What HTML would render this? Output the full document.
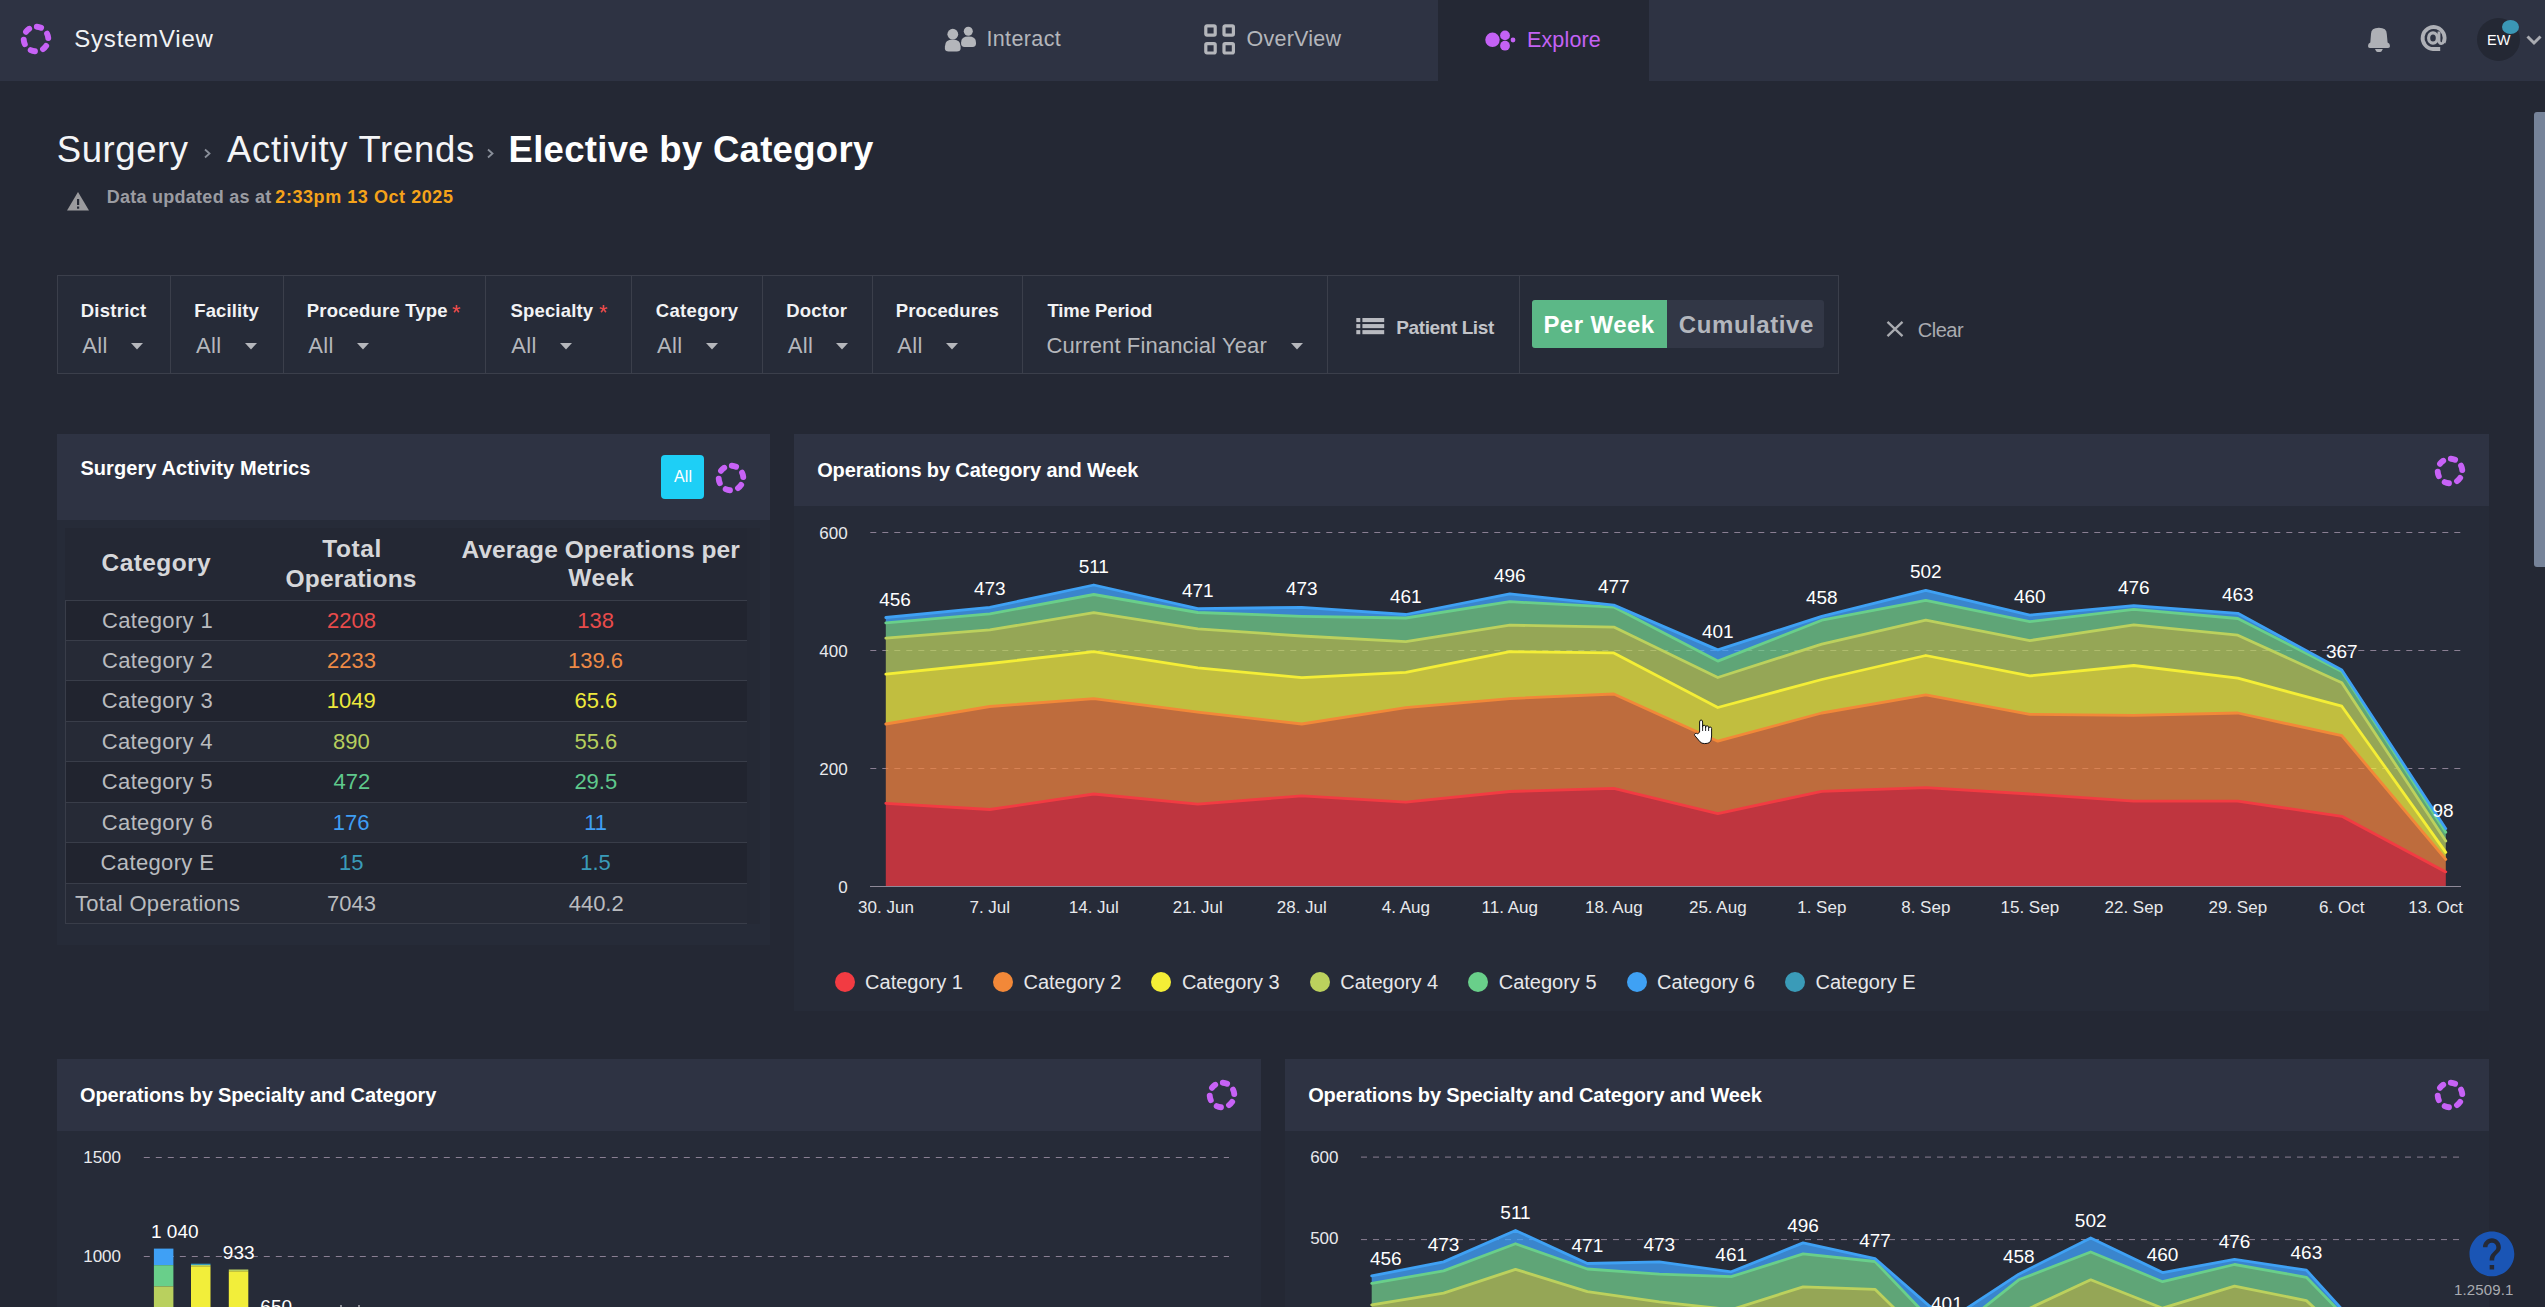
<!DOCTYPE html><html><head><meta charset="utf-8"><style>
html,body{margin:0;padding:0;}
body{width:2545px;height:1307px;overflow:hidden;background:#242834;font-family:"Liberation Sans", sans-serif;position:relative;}
.t{position:absolute;line-height:1;white-space:nowrap;}
.r{position:absolute;}
svg{position:absolute;overflow:visible;}
</style></head><body>
<div class="r" style="left:0px;top:0px;width:2545px;height:81px;background:#2e3343;"></div>
<div class="r" style="left:1438px;top:0px;width:211px;height:81px;background:#242834;"></div>
<svg style="left:16.200000000000003px;top:19.4px" width="40" height="40" viewBox="0 0 40 40"><circle cx="20.0" cy="20.0" r="12.3" fill="none" stroke="#c762f6" stroke-width="5.9" stroke-dasharray="4.40 8.48" stroke-linecap="round" transform="rotate(-86.2 20.0 20.0)"/></svg>
<div class="t" style="left:74.32px;top:26.98px;font-size:24px;color:#f2f3f5;font-weight:normal;letter-spacing:0.776px;">SystemView</div>
<svg style="left:944px;top:26px" width="34" height="28" viewBox="0 0 34 28" fill="#b4b6bb">
<circle cx="8.8" cy="8.2" r="5.4"/><path d="M0.9 20.5 Q0.9 13.6 8.75 13.6 Q16.6 13.6 16.6 20.5 L16.6 22.2 Q16.6 25.4 12.8 25.4 L4.7 25.4 Q0.9 25.4 0.9 22.2 Z"/>
<circle cx="24.3" cy="5.3" r="4.5"/><path d="M17.1 16.5 Q17.1 10.6 24.55 10.6 Q32 10.6 32 16.5 L32 17.8 Q32 20.9 28.6 20.9 L20.5 20.9 Q17.1 20.9 17.1 17.8 Z"/>
</svg>
<div class="t" style="left:986.41px;top:29.40px;font-size:21.5px;color:#b4b6bb;font-weight:normal;letter-spacing:0.378px;">Interact</div>
<svg style="left:1204px;top:24px" width="32" height="31" viewBox="0 0 32 31" fill="none" stroke="#b4b6bb" stroke-width="3.2">
<rect x="1.8" y="1.8" width="9.4" height="9.4" rx="1.2"/><rect x="20" y="1.8" width="9.4" height="9.4" rx="1.2"/>
<rect x="1.8" y="19.6" width="9.4" height="9.4" rx="1.2"/><rect x="20" y="19.6" width="9.4" height="9.4" rx="1.2"/>
</svg>
<div class="t" style="left:1246.58px;top:29.40px;font-size:21.5px;color:#b4b6bb;font-weight:normal;letter-spacing:0.220px;">OverView</div>
<svg style="left:1484px;top:28px" width="34" height="24" viewBox="0 0 34 24">
<circle cx="8.5" cy="11.8" r="7.2" fill="#c462f5"/><circle cx="21" cy="7.4" r="4.9" fill="#c462f5"/>
<circle cx="21" cy="17.7" r="4.9" fill="#c462f5"/><circle cx="29" cy="12" r="2.4" fill="#c462f5"/>
</svg>
<div class="t" style="left:1527.03px;top:29.60px;font-size:21.5px;color:#c462f5;font-weight:normal;letter-spacing:0.134px;">Explore</div>
<svg style="left:2360px;top:20px" width="40" height="38" viewBox="0 0 40 38" fill="#aeb0b6">
<path d="M11 14 Q11 7.8 18.9 7.8 Q26.8 7.8 26.8 14 L27.6 22.6 Q30 23.6 30 26 Q30 28 28 28 L9.8 28 Q8 28 8 26 Q8 23.6 10.3 22.6 Z"/>
<path d="M15 28.9 L22.8 28.9 L21.6 31.3 Q21.1 32.1 20.1 32.1 L17.7 32.1 Q16.7 32.1 16.2 31.3 Z"/>
</svg>
<svg style="left:2412px;top:18px" width="40" height="40" viewBox="0 0 40 40" fill="none" stroke="#aeb0b6">
<path d="M31.6 24.6 A11 11 0 1 0 21 31 L28.2 31" stroke-width="3.8"/>
<ellipse cx="21" cy="20" rx="4.4" ry="5.1" stroke-width="3.2"/>
<path d="M27 13.4 L27 22.6 Q27 25.6 29.3 25.6 Q31 25.6 31.8 23.8" stroke-width="2.8"/>
</svg>
<div class="r" style="left:2477px;top:18px;width:43px;height:43px;border-radius:50%;background:#242834"></div>
<div class="t" style="left:2487.00px;top:32.73px;font-size:14.5px;color:#ffffff;font-weight:normal;letter-spacing:-0.012px;">EW</div>
<div class="r" style="left:2502px;top:20px;width:17px;height:14px;border-radius:50%;background:#3b97b5"></div>
<svg style="left:2526px;top:35px" width="16" height="10" viewBox="0 0 16 10"><path d="M1.5 1.5 L8 8 L14.5 1.5" fill="none" stroke="#a9abb1" stroke-width="3"/></svg>
<div class="r" style="left:2534px;top:112.3px;width:11px;height:454.6px;border-radius:3px 0 0 3px;background:#768399"></div>
<div class="t" style="left:56.76px;top:132.10px;font-size:36.5px;color:#f4f5f7;font-weight:normal;letter-spacing:0.582px;">Surgery</div>
<svg style="left:203px;top:148px" width="9" height="11" viewBox="0 0 9 11"><path d="M2 1.5 L6.5 5.5 L2 9.5" fill="none" stroke="#8a8f9a" stroke-width="1.8"/></svg>
<div class="t" style="left:226.91px;top:132.10px;font-size:36.5px;color:#f4f5f7;font-weight:normal;letter-spacing:0.716px;">Activity Trends</div>
<svg style="left:486px;top:148px" width="9" height="11" viewBox="0 0 9 11"><path d="M2 1.5 L6.5 5.5 L2 9.5" fill="none" stroke="#8a8f9a" stroke-width="1.8"/></svg>
<div class="t" style="left:508.54px;top:132.10px;font-size:36.5px;color:#ffffff;font-weight:bold;letter-spacing:0.294px;">Elective by Category</div>
<svg style="left:66px;top:191px" width="24" height="20" viewBox="0 0 24 20"><path d="M12 1 L23 19.5 L1 19.5 Z" fill="#9b9b9e"/>
<rect x="11" y="8" width="2.2" height="6" fill="#242834"/><rect x="11" y="15.5" width="2.2" height="2.2" fill="#242834"/></svg>
<div class="t" style="left:106.78px;top:188.36px;font-size:18px;color:#9b9ca2;font-weight:bold;letter-spacing:0.260px;">Data updated as at</div>
<div class="t" style="left:275.37px;top:188.36px;font-size:18px;color:#f5a31a;font-weight:bold;letter-spacing:0.556px;">2:33pm 13 Oct 2025</div>
<div class="r" style="left:57px;top:275px;width:1780px;height:97px;border:1px solid #3b3f4b;background:#262b38"></div>
<div class="r" style="left:170px;top:276px;width:1px;height:97px;background:#3b3f4b;"></div>
<div class="r" style="left:283px;top:276px;width:1px;height:97px;background:#3b3f4b;"></div>
<div class="r" style="left:485px;top:276px;width:1px;height:97px;background:#3b3f4b;"></div>
<div class="r" style="left:631px;top:276px;width:1px;height:97px;background:#3b3f4b;"></div>
<div class="r" style="left:762px;top:276px;width:1px;height:97px;background:#3b3f4b;"></div>
<div class="r" style="left:872px;top:276px;width:1px;height:97px;background:#3b3f4b;"></div>
<div class="r" style="left:1022px;top:276px;width:1px;height:97px;background:#3b3f4b;"></div>
<div class="r" style="left:1327px;top:276px;width:1px;height:97px;background:#3b3f4b;"></div>
<div class="r" style="left:1519px;top:276px;width:1px;height:97px;background:#3b3f4b;"></div>
<div class="t" style="left:80.75px;top:301.54px;font-size:18.5px;color:#f2f3f5;font-weight:bold;letter-spacing:0.250px;">District</div>
<div class="t" style="left:82.34px;top:335.38px;font-size:22px;color:#b5b7bc;font-weight:normal;letter-spacing:0.332px;">All</div>
<svg style="left:131px;top:343px" width="12" height="7" viewBox="0 0 12 7"><path d="M0 0 L12 0 L6 6.5 Z" fill="#b5b7bc"/></svg>
<div class="t" style="left:194.35px;top:301.54px;font-size:18.5px;color:#f2f3f5;font-weight:bold;letter-spacing:0.087px;">Facility</div>
<div class="t" style="left:195.94px;top:335.38px;font-size:22px;color:#b5b7bc;font-weight:normal;letter-spacing:0.332px;">All</div>
<svg style="left:244.6px;top:343px" width="12" height="7" viewBox="0 0 12 7"><path d="M0 0 L12 0 L6 6.5 Z" fill="#b5b7bc"/></svg>
<div class="t" style="left:306.75px;top:301.54px;font-size:18.5px;color:#f2f3f5;font-weight:bold;letter-spacing:0.186px;">Procedure Type</div>
<div class="t" style="left:308.34px;top:335.38px;font-size:22px;color:#b5b7bc;font-weight:normal;letter-spacing:0.333px;">All</div>
<svg style="left:357px;top:343px" width="12" height="7" viewBox="0 0 12 7"><path d="M0 0 L12 0 L6 6.5 Z" fill="#b5b7bc"/></svg>
<div class="t" style="left:510.44px;top:301.54px;font-size:18.5px;color:#f2f3f5;font-weight:bold;letter-spacing:0.179px;">Specialty</div>
<div class="t" style="left:511.34px;top:335.38px;font-size:22px;color:#b5b7bc;font-weight:normal;letter-spacing:0.333px;">All</div>
<svg style="left:560px;top:343px" width="12" height="7" viewBox="0 0 12 7"><path d="M0 0 L12 0 L6 6.5 Z" fill="#b5b7bc"/></svg>
<div class="t" style="left:655.86px;top:301.54px;font-size:18.5px;color:#f2f3f5;font-weight:bold;letter-spacing:0.297px;">Category</div>
<div class="t" style="left:656.95px;top:335.38px;font-size:22px;color:#b5b7bc;font-weight:normal;letter-spacing:0.333px;">All</div>
<svg style="left:705.6px;top:343px" width="12" height="7" viewBox="0 0 12 7"><path d="M0 0 L12 0 L6 6.5 Z" fill="#b5b7bc"/></svg>
<div class="t" style="left:786.15px;top:301.54px;font-size:18.5px;color:#f2f3f5;font-weight:bold;letter-spacing:0.222px;">Doctor</div>
<div class="t" style="left:787.75px;top:335.38px;font-size:22px;color:#b5b7bc;font-weight:normal;letter-spacing:0.333px;">All</div>
<svg style="left:836.4px;top:343px" width="12" height="7" viewBox="0 0 12 7"><path d="M0 0 L12 0 L6 6.5 Z" fill="#b5b7bc"/></svg>
<div class="t" style="left:895.75px;top:301.54px;font-size:18.5px;color:#f2f3f5;font-weight:bold;letter-spacing:0.132px;">Procedures</div>
<div class="t" style="left:897.35px;top:335.38px;font-size:22px;color:#b5b7bc;font-weight:normal;letter-spacing:0.333px;">All</div>
<svg style="left:946px;top:343px" width="12" height="7" viewBox="0 0 12 7"><path d="M0 0 L12 0 L6 6.5 Z" fill="#b5b7bc"/></svg>
<svg style="left:452.4px;top:304.5px" width="9" height="8" viewBox="0 0 9 8" fill="#e84a4a"><path d="M3.7 0 H5.3 V2.9 L8 2 L8.5 3.5 L5.8 4.3 L7.5 6.8 L6.2 7.7 L4.5 5.3 L2.8 7.7 L1.5 6.8 L3.2 4.3 L0.5 3.5 L1 2 L3.7 2.9 Z"/></svg>
<svg style="left:598.6px;top:304.5px" width="9" height="8" viewBox="0 0 9 8" fill="#e84a4a"><path d="M3.7 0 H5.3 V2.9 L8 2 L8.5 3.5 L5.8 4.3 L7.5 6.8 L6.2 7.7 L4.5 5.3 L2.8 7.7 L1.5 6.8 L3.2 4.3 L0.5 3.5 L1 2 L3.7 2.9 Z"/></svg>
<div class="t" style="left:1047.41px;top:301.54px;font-size:18.5px;color:#f2f3f5;font-weight:bold;letter-spacing:-0.075px;">Time Period</div>
<div class="t" style="left:1046.40px;top:335.38px;font-size:22px;color:#b5b7bc;font-weight:normal;letter-spacing:0.126px;">Current Financial Year</div>
<svg style="left:1291px;top:343px" width="12" height="7" viewBox="0 0 12 7"><path d="M0 0 L12 0 L6 6.5 Z" fill="#b5b7bc"/></svg>
<svg style="left:1355.6px;top:317.9px" width="30" height="17" viewBox="0 0 30 17" fill="#b8bac0">
<rect x="0.3" y="0" width="4" height="4.1"/><rect x="6.4" y="0" width="21.8" height="4.1"/>
<rect x="0.3" y="6.05" width="4" height="4.1"/><rect x="6.4" y="6.05" width="21.8" height="4.1"/>
<rect x="0.3" y="12.1" width="4" height="4.1"/><rect x="6.4" y="12.1" width="21.8" height="4.1"/></svg>
<div class="t" style="left:1396.32px;top:317.82px;font-size:19px;color:#c2c4c9;font-weight:bold;letter-spacing:-0.408px;">Patient List</div>
<div class="r" style="left:1532px;top:300px;width:292px;height:48px;background:#323746;border-radius:3px"></div>
<div class="r" style="left:1532px;top:300px;width:135px;height:48px;background:#5cb887;border-radius:3px 0 0 3px"></div>
<div class="t" style="left:1543.38px;top:312.68px;font-size:24px;color:#ffffff;font-weight:bold;letter-spacing:0.454px;">Per Week</div>
<div class="t" style="left:1678.84px;top:312.68px;font-size:24px;color:#b3b6bd;font-weight:bold;letter-spacing:0.576px;">Cumulative</div>
<svg style="left:1886px;top:321px" width="18" height="16" viewBox="0 0 18 16"><path d="M1.5 0.8 L16.5 15.2 M16.5 0.8 L1.5 15.2" stroke="#a9abb0" stroke-width="2.3"/></svg>
<div class="t" style="left:1917.70px;top:319.67px;font-size:20px;color:#a9abb0;font-weight:normal;letter-spacing:-0.450px;">Clear</div>
<div class="r" style="left:57px;top:434px;width:713px;height:86px;background:#2e3343;"></div>
<div class="r" style="left:57px;top:520px;width:713px;height:425px;background:#262b38;"></div>
<div class="t" style="left:80.40px;top:457.57px;font-size:20px;color:#ffffff;font-weight:bold;letter-spacing:0.078px;">Surgery Activity Metrics</div>
<div class="r" style="left:661px;top:455px;width:43px;height:44px;background:#1ecff6;border-radius:4px"></div>
<div class="t" style="left:673.95px;top:469.46px;font-size:16px;color:#ffffff;font-weight:normal;letter-spacing:0.167px;">All</div>
<svg style="left:710.8px;top:457.5px" width="40" height="40" viewBox="0 0 40 40"><circle cx="20.0" cy="20.0" r="12.3" fill="none" stroke="#c762f6" stroke-width="5.9" stroke-dasharray="4.40 8.48" stroke-linecap="round" transform="rotate(-86.2 20.0 20.0)"/></svg>
<div class="r" style="left:65px;top:528px;width:682px;height:72px;background:#242834;"></div>
<div class="r" style="left:747px;top:528px;width:13px;height:396px;background:#252935;"></div>
<div class="t" style="left:101.62px;top:551.26px;font-size:24.5px;color:#d6d7da;font-weight:bold;letter-spacing:0.394px;">Category</div>
<div class="t" style="left:322.15px;top:537.26px;font-size:24.5px;color:#d6d7da;font-weight:bold;letter-spacing:0.611px;">Total</div>
<div class="t" style="left:285.62px;top:566.66px;font-size:24.5px;color:#d6d7da;font-weight:bold;letter-spacing:0.162px;">Operations</div>
<div class="t" style="left:461.59px;top:537.56px;font-size:24.5px;color:#d6d7da;font-weight:bold;letter-spacing:0.065px;">Average Operations per</div>
<div class="t" style="left:568.30px;top:566.16px;font-size:24.5px;color:#d6d7da;font-weight:bold;letter-spacing:0.608px;">Week</div>
<div class="r" style="left:65px;top:600px;width:682px;height:40px;background:#21242f;"></div>
<div class="r" style="left:65px;top:600px;width:682px;height:1px;background:#393d49;"></div>
<div class="t" style="left:101.90px;top:609.88px;font-size:22px;color:#b9bbbf;font-weight:normal;letter-spacing:0.351px;">Category 1</div>
<div class="t" style="left:326.97px;top:609.88px;font-size:22px;color:#e84b4b;font-weight:normal;letter-spacing:0.000px;">2208</div>
<div class="t" style="left:577.20px;top:609.88px;font-size:22px;color:#e84b4b;font-weight:normal;letter-spacing:-0.000px;">138</div>
<div class="r" style="left:65px;top:640px;width:682px;height:40px;background:#262a36;"></div>
<div class="r" style="left:65px;top:640px;width:682px;height:1px;background:#393d49;"></div>
<div class="t" style="left:101.93px;top:649.88px;font-size:22px;color:#b9bbbf;font-weight:normal;letter-spacing:0.351px;">Category 2</div>
<div class="t" style="left:326.97px;top:649.88px;font-size:22px;color:#ef8a46;font-weight:normal;letter-spacing:0.000px;">2233</div>
<div class="t" style="left:568.01px;top:649.88px;font-size:22px;color:#ef8a46;font-weight:normal;letter-spacing:0.000px;">139.6</div>
<div class="r" style="left:65px;top:680px;width:682px;height:41px;background:#21242f;"></div>
<div class="r" style="left:65px;top:680px;width:682px;height:1px;background:#393d49;"></div>
<div class="t" style="left:101.84px;top:690.38px;font-size:22px;color:#b9bbbf;font-weight:normal;letter-spacing:0.352px;">Category 3</div>
<div class="t" style="left:326.72px;top:690.38px;font-size:22px;color:#eee93c;font-weight:normal;letter-spacing:-0.000px;">1049</div>
<div class="t" style="left:574.42px;top:690.38px;font-size:22px;color:#eee93c;font-weight:normal;letter-spacing:0.000px;">65.6</div>
<div class="r" style="left:65px;top:721px;width:682px;height:40px;background:#262a36;"></div>
<div class="r" style="left:65px;top:721px;width:682px;height:1px;background:#393d49;"></div>
<div class="t" style="left:101.67px;top:730.88px;font-size:22px;color:#b9bbbf;font-weight:normal;letter-spacing:0.353px;">Category 4</div>
<div class="t" style="left:333.10px;top:730.88px;font-size:22px;color:#b7ce5d;font-weight:normal;letter-spacing:-0.000px;">890</div>
<div class="t" style="left:574.53px;top:730.88px;font-size:22px;color:#b7ce5d;font-weight:normal;letter-spacing:-0.000px;">55.6</div>
<div class="r" style="left:65px;top:761px;width:682px;height:41px;background:#21242f;"></div>
<div class="r" style="left:65px;top:761px;width:682px;height:1px;background:#393d49;"></div>
<div class="t" style="left:101.82px;top:771.38px;font-size:22px;color:#b9bbbf;font-weight:normal;letter-spacing:0.352px;">Category 5</div>
<div class="t" style="left:333.46px;top:771.38px;font-size:22px;color:#5fc98c;font-weight:normal;letter-spacing:0.000px;">472</div>
<div class="t" style="left:574.39px;top:771.38px;font-size:22px;color:#5fc98c;font-weight:normal;letter-spacing:-0.000px;">29.5</div>
<div class="r" style="left:65px;top:802px;width:682px;height:40px;background:#262a36;"></div>
<div class="r" style="left:65px;top:802px;width:682px;height:1px;background:#393d49;"></div>
<div class="t" style="left:101.84px;top:811.88px;font-size:22px;color:#b9bbbf;font-weight:normal;letter-spacing:0.352px;">Category 6</div>
<div class="t" style="left:332.80px;top:811.88px;font-size:22px;color:#3f9ef4;font-weight:normal;letter-spacing:0.000px;">176</div>
<div class="t" style="left:584.18px;top:811.88px;font-size:22px;color:#3f9ef4;font-weight:normal;letter-spacing:0.000px;">11</div>
<div class="r" style="left:65px;top:842px;width:682px;height:41px;background:#21242f;"></div>
<div class="r" style="left:65px;top:842px;width:682px;height:1px;background:#393d49;"></div>
<div class="t" style="left:100.57px;top:852.38px;font-size:22px;color:#b9bbbf;font-weight:normal;letter-spacing:0.360px;">Category E</div>
<div class="t" style="left:338.91px;top:852.38px;font-size:22px;color:#3a9bb9;font-weight:normal;letter-spacing:-0.000px;">15</div>
<div class="t" style="left:580.23px;top:852.38px;font-size:22px;color:#3a9bb9;font-weight:normal;letter-spacing:-0.000px;">1.5</div>
<div class="r" style="left:65px;top:883px;width:682px;height:40px;background:#262a36;"></div>
<div class="r" style="left:65px;top:883px;width:682px;height:1px;background:#393d49;"></div>
<div class="t" style="left:74.95px;top:892.88px;font-size:22px;color:#b9bbbf;font-weight:normal;letter-spacing:0.318px;">Total Operations</div>
<div class="t" style="left:326.97px;top:892.88px;font-size:22px;color:#b9bbbf;font-weight:normal;letter-spacing:0.000px;">7043</div>
<div class="t" style="left:568.67px;top:892.88px;font-size:22px;color:#b9bbbf;font-weight:normal;letter-spacing:0.000px;">440.2</div>
<div class="r" style="left:65px;top:923px;width:682px;height:1px;background:#393d49;"></div>
<div class="r" style="left:65px;top:600px;width:1px;height:324px;background:#393d49;"></div>
<div class="r" style="left:794px;top:434px;width:1695px;height:72px;background:#2e3343;"></div>
<div class="r" style="left:794px;top:506px;width:1695px;height:505px;background:#262b38;"></div>
<div class="t" style="left:817.20px;top:459.57px;font-size:20px;color:#ffffff;font-weight:bold;letter-spacing:-0.133px;">Operations by Category and Week</div>
<svg style="left:2430.0px;top:450.6px" width="40" height="40" viewBox="0 0 40 40"><circle cx="20.0" cy="20.0" r="12.3" fill="none" stroke="#c762f6" stroke-width="5.9" stroke-dasharray="4.40 8.48" stroke-linecap="round" transform="rotate(-86.2 20.0 20.0)"/></svg>
<svg style="left:794px;top:506px" width="1695" height="505" viewBox="0 0 1695 505">
<line x1="76.29999999999995" y1="26.5" x2="1667" y2="26.5" stroke="#8a7f93" stroke-width="1" stroke-dasharray="6 6"/>
<line x1="76.29999999999995" y1="144.5" x2="1667" y2="144.5" stroke="#8a7f93" stroke-width="1" stroke-dasharray="6 6"/>
<line x1="76.29999999999995" y1="262.5" x2="1667" y2="262.5" stroke="#8a7f93" stroke-width="1" stroke-dasharray="6 6"/>
<polygon points="91.8,297.3 195.8,303.5 299.8,288.0 403.8,298.1 507.8,289.9 611.8,296.2 715.8,285.5 819.8,282.3 923.8,307.7 1027.8,285.3 1131.8,281.7 1235.8,288.0 1339.8,295.2 1443.8,295.2 1547.8,310.3 1651.8,365.9 1651.8,380.5 1547.8,380.5 1443.8,380.5 1339.8,380.5 1235.8,380.5 1131.8,380.5 1027.8,380.5 923.8,380.5 819.8,380.5 715.8,380.5 611.8,380.5 507.8,380.5 403.8,380.5 299.8,380.5 195.8,380.5 91.8,380.5" fill="#f33a41" fill-opacity="0.75"/>
<polygon points="91.8,218.0 195.8,200.5 299.8,192.6 403.8,206.2 507.8,218.0 611.8,201.7 715.8,192.6 819.8,188.0 923.8,235.2 1027.8,207.0 1131.8,188.9 1235.8,208.4 1339.8,209.4 1443.8,207.0 1547.8,229.7 1651.8,353.4 1651.8,365.9 1547.8,310.3 1443.8,295.2 1339.8,295.2 1235.8,288.0 1131.8,281.7 1027.8,285.3 923.8,307.7 819.8,282.3 715.8,285.5 611.8,296.2 507.8,289.9 403.8,298.1 299.8,288.0 195.8,303.5 91.8,297.3" fill="#f2833f" fill-opacity="0.75"/>
<polygon points="91.8,168.1 195.8,157.5 299.8,145.7 403.8,161.8 507.8,171.7 611.8,166.3 715.8,145.7 819.8,146.9 923.8,201.5 1027.8,173.5 1131.8,149.5 1235.8,169.9 1339.8,159.5 1443.8,172.2 1547.8,200.2 1651.8,346.4 1651.8,353.4 1547.8,229.7 1443.8,207.0 1339.8,209.4 1235.8,208.4 1131.8,188.9 1027.8,207.0 923.8,235.2 819.8,188.0 715.8,192.6 611.8,201.7 507.8,218.0 403.8,206.2 299.8,192.6 195.8,200.5 91.8,218.0" fill="#f5f041" fill-opacity="0.75"/>
<polygon points="91.8,132.1 195.8,123.9 299.8,106.7 403.8,122.8 507.8,130.0 611.8,135.6 715.8,119.2 819.8,121.1 923.8,171.5 1027.8,138.2 1131.8,114.2 1235.8,134.6 1339.8,118.8 1443.8,129.2 1547.8,176.7 1651.8,335.1 1651.8,346.4 1547.8,200.2 1443.8,172.2 1339.8,159.5 1235.8,169.9 1131.8,149.5 1027.8,173.5 923.8,201.5 819.8,146.9 715.8,145.7 611.8,166.3 507.8,171.7 403.8,161.8 299.8,145.7 195.8,157.5 91.8,168.1" fill="#bbd060" fill-opacity="0.75"/>
<polygon points="91.8,116.8 195.8,107.9 299.8,88.5 403.8,106.5 507.8,110.3 611.8,112.0 715.8,95.7 819.8,101.1 923.8,155.1 1027.8,114.2 1131.8,94.4 1235.8,115.6 1339.8,103.3 1443.8,112.5 1547.8,165.4 1651.8,326.2 1651.8,335.1 1547.8,176.7 1443.8,129.2 1339.8,118.8 1235.8,134.6 1131.8,114.2 1027.8,138.2 923.8,171.5 819.8,121.1 715.8,119.2 611.8,135.6 507.8,130.0 403.8,122.8 299.8,106.7 195.8,123.9 91.8,132.1" fill="#73cf8c" fill-opacity="0.75"/>
<polygon points="91.8,111.5 195.8,101.4 299.8,79.0 403.8,102.6 507.8,101.4 611.8,108.5 715.8,87.9 819.8,99.1 923.8,143.9 1027.8,110.3 1131.8,84.3 1235.8,109.1 1339.8,99.7 1443.8,107.3 1547.8,164.0 1651.8,322.7 1651.8,326.2 1547.8,165.4 1443.8,112.5 1339.8,103.3 1235.8,115.6 1131.8,94.4 1027.8,114.2 923.8,155.1 819.8,101.1 715.8,95.7 611.8,112.0 507.8,110.3 403.8,106.5 299.8,88.5 195.8,107.9 91.8,116.8" fill="#41a4ff" fill-opacity="0.75"/>
<polyline points="91.8,297.3 195.8,303.5 299.8,288.0 403.8,298.1 507.8,289.9 611.8,296.2 715.8,285.5 819.8,282.3 923.8,307.7 1027.8,285.3 1131.8,281.7 1235.8,288.0 1339.8,295.2 1443.8,295.2 1547.8,310.3 1651.8,365.9" fill="none" stroke="#f23b42" stroke-width="2.8" stroke-linejoin="round" stroke-linecap="round"/>
<polyline points="91.8,218.0 195.8,200.5 299.8,192.6 403.8,206.2 507.8,218.0 611.8,201.7 715.8,192.6 819.8,188.0 923.8,235.2 1027.8,207.0 1131.8,188.9 1235.8,208.4 1339.8,209.4 1443.8,207.0 1547.8,229.7 1651.8,353.4" fill="none" stroke="#f28838" stroke-width="2.8" stroke-linejoin="round" stroke-linecap="round"/>
<polyline points="91.8,168.1 195.8,157.5 299.8,145.7 403.8,161.8 507.8,171.7 611.8,166.3 715.8,145.7 819.8,146.9 923.8,201.5 1027.8,173.5 1131.8,149.5 1235.8,169.9 1339.8,159.5 1443.8,172.2 1547.8,200.2 1651.8,346.4" fill="none" stroke="#f4ee36" stroke-width="2.8" stroke-linejoin="round" stroke-linecap="round"/>
<polyline points="91.8,132.1 195.8,123.9 299.8,106.7 403.8,122.8 507.8,130.0 611.8,135.6 715.8,119.2 819.8,121.1 923.8,171.5 1027.8,138.2 1131.8,114.2 1235.8,134.6 1339.8,118.8 1443.8,129.2 1547.8,176.7 1651.8,335.1" fill="none" stroke="#bcd15d" stroke-width="2.8" stroke-linejoin="round" stroke-linecap="round"/>
<polyline points="91.8,116.8 195.8,107.9 299.8,88.5 403.8,106.5 507.8,110.3 611.8,112.0 715.8,95.7 819.8,101.1 923.8,155.1 1027.8,114.2 1131.8,94.4 1235.8,115.6 1339.8,103.3 1443.8,112.5 1547.8,165.4 1651.8,326.2" fill="none" stroke="#69cf8a" stroke-width="2.8" stroke-linejoin="round" stroke-linecap="round"/>
<polyline points="91.8,111.5 195.8,101.4 299.8,79.0 403.8,102.6 507.8,101.4 611.8,108.5 715.8,87.9 819.8,99.1 923.8,143.9 1027.8,110.3 1131.8,84.3 1235.8,109.1 1339.8,99.7 1443.8,107.3 1547.8,164.0 1651.8,322.7" fill="none" stroke="#3fa1f4" stroke-width="2.8" stroke-linejoin="round" stroke-linecap="round"/>
</svg>
<div class="r" style="left:870px;top:886px;width:1591px;height:1px;background:#8f8a99;"></div>
<div class="t" style="top:525.1px;font-size:17px;color:#e8e9ec;font-weight:normal;left:787.6px;width:60px;text-align:right;">600</div>
<div class="t" style="top:643.1px;font-size:17px;color:#e8e9ec;font-weight:normal;left:787.6px;width:60px;text-align:right;">400</div>
<div class="t" style="top:761.1px;font-size:17px;color:#e8e9ec;font-weight:normal;left:787.6px;width:60px;text-align:right;">200</div>
<div class="t" style="top:879.1px;font-size:17px;color:#e8e9ec;font-weight:normal;left:787.6px;width:60px;text-align:right;">0</div>
<div class="t" style="top:898.9px;font-size:17px;color:#e8e9ec;font-weight:normal;left:836.0px;width:100px;text-align:center;">30. Jun</div>
<div class="t" style="top:898.9px;font-size:17px;color:#e8e9ec;font-weight:normal;left:939.8px;width:100px;text-align:center;">7. Jul</div>
<div class="t" style="top:898.9px;font-size:17px;color:#e8e9ec;font-weight:normal;left:1043.8px;width:100px;text-align:center;">14. Jul</div>
<div class="t" style="top:898.9px;font-size:17px;color:#e8e9ec;font-weight:normal;left:1147.8px;width:100px;text-align:center;">21. Jul</div>
<div class="t" style="top:898.9px;font-size:17px;color:#e8e9ec;font-weight:normal;left:1251.8px;width:100px;text-align:center;">28. Jul</div>
<div class="t" style="top:898.9px;font-size:17px;color:#e8e9ec;font-weight:normal;left:1355.8px;width:100px;text-align:center;">4. Aug</div>
<div class="t" style="top:898.9px;font-size:17px;color:#e8e9ec;font-weight:normal;left:1459.8px;width:100px;text-align:center;">11. Aug</div>
<div class="t" style="top:898.9px;font-size:17px;color:#e8e9ec;font-weight:normal;left:1563.8px;width:100px;text-align:center;">18. Aug</div>
<div class="t" style="top:898.9px;font-size:17px;color:#e8e9ec;font-weight:normal;left:1667.8px;width:100px;text-align:center;">25. Aug</div>
<div class="t" style="top:898.9px;font-size:17px;color:#e8e9ec;font-weight:normal;left:1771.8px;width:100px;text-align:center;">1. Sep</div>
<div class="t" style="top:898.9px;font-size:17px;color:#e8e9ec;font-weight:normal;left:1875.8px;width:100px;text-align:center;">8. Sep</div>
<div class="t" style="top:898.9px;font-size:17px;color:#e8e9ec;font-weight:normal;left:1979.8px;width:100px;text-align:center;">15. Sep</div>
<div class="t" style="top:898.9px;font-size:17px;color:#e8e9ec;font-weight:normal;left:2083.8px;width:100px;text-align:center;">22. Sep</div>
<div class="t" style="top:898.9px;font-size:17px;color:#e8e9ec;font-weight:normal;left:2187.8px;width:100px;text-align:center;">29. Sep</div>
<div class="t" style="top:898.9px;font-size:17px;color:#e8e9ec;font-weight:normal;left:2291.8px;width:100px;text-align:center;">6. Oct</div>
<div class="t" style="top:898.9px;font-size:17px;color:#e8e9ec;font-weight:normal;left:2385.6px;width:100px;text-align:center;">13. Oct</div>
<div class="t" style="top:589.5px;font-size:19px;color:#ffffff;font-weight:normal;left:865.0px;width:60px;text-align:center;">456</div>
<div class="t" style="top:579.4px;font-size:19px;color:#ffffff;font-weight:normal;left:959.8px;width:60px;text-align:center;">473</div>
<div class="t" style="top:557.0px;font-size:19px;color:#ffffff;font-weight:normal;left:1063.8px;width:60px;text-align:center;">511</div>
<div class="t" style="top:580.6px;font-size:19px;color:#ffffff;font-weight:normal;left:1167.8px;width:60px;text-align:center;">471</div>
<div class="t" style="top:579.4px;font-size:19px;color:#ffffff;font-weight:normal;left:1271.8px;width:60px;text-align:center;">473</div>
<div class="t" style="top:586.5px;font-size:19px;color:#ffffff;font-weight:normal;left:1375.8px;width:60px;text-align:center;">461</div>
<div class="t" style="top:565.9px;font-size:19px;color:#ffffff;font-weight:normal;left:1479.8px;width:60px;text-align:center;">496</div>
<div class="t" style="top:577.1px;font-size:19px;color:#ffffff;font-weight:normal;left:1583.8px;width:60px;text-align:center;">477</div>
<div class="t" style="top:621.9px;font-size:19px;color:#ffffff;font-weight:normal;left:1687.8px;width:60px;text-align:center;">401</div>
<div class="t" style="top:588.3px;font-size:19px;color:#ffffff;font-weight:normal;left:1791.8px;width:60px;text-align:center;">458</div>
<div class="t" style="top:562.3px;font-size:19px;color:#ffffff;font-weight:normal;left:1895.8px;width:60px;text-align:center;">502</div>
<div class="t" style="top:587.1px;font-size:19px;color:#ffffff;font-weight:normal;left:1999.8px;width:60px;text-align:center;">460</div>
<div class="t" style="top:577.7px;font-size:19px;color:#ffffff;font-weight:normal;left:2103.8px;width:60px;text-align:center;">476</div>
<div class="t" style="top:585.3px;font-size:19px;color:#ffffff;font-weight:normal;left:2207.8px;width:60px;text-align:center;">463</div>
<div class="t" style="top:642.0px;font-size:19px;color:#ffffff;font-weight:normal;left:2311.8px;width:60px;text-align:center;">367</div>
<div class="t" style="top:800.7px;font-size:19px;color:#ffffff;font-weight:normal;left:2413.0px;width:60px;text-align:center;">98</div>
<div class="r" style="left:834.6px;top:971.7px;width:20px;height:20px;border-radius:50%;background:#f23b42"></div>
<div class="t" style="top:972.1px;font-size:20px;color:#e6e7ea;font-weight:normal;left:865.1px;">Category 1</div>
<div class="r" style="left:993.0px;top:971.7px;width:20px;height:20px;border-radius:50%;background:#f28838"></div>
<div class="t" style="top:972.1px;font-size:20px;color:#e6e7ea;font-weight:normal;left:1023.5px;">Category 2</div>
<div class="r" style="left:1151.4px;top:971.7px;width:20px;height:20px;border-radius:50%;background:#f4ee36"></div>
<div class="t" style="top:972.1px;font-size:20px;color:#e6e7ea;font-weight:normal;left:1181.9px;">Category 3</div>
<div class="r" style="left:1309.8px;top:971.7px;width:20px;height:20px;border-radius:50%;background:#bcd15d"></div>
<div class="t" style="top:972.1px;font-size:20px;color:#e6e7ea;font-weight:normal;left:1340.3px;">Category 4</div>
<div class="r" style="left:1468.2px;top:971.7px;width:20px;height:20px;border-radius:50%;background:#69cf8a"></div>
<div class="t" style="top:972.1px;font-size:20px;color:#e6e7ea;font-weight:normal;left:1498.7px;">Category 5</div>
<div class="r" style="left:1626.6px;top:971.7px;width:20px;height:20px;border-radius:50%;background:#3fa1f4"></div>
<div class="t" style="top:972.1px;font-size:20px;color:#e6e7ea;font-weight:normal;left:1657.1px;">Category 6</div>
<div class="r" style="left:1785.0px;top:971.7px;width:20px;height:20px;border-radius:50%;background:#3a9bb8"></div>
<div class="t" style="top:972.1px;font-size:20px;color:#e6e7ea;font-weight:normal;left:1815.5px;">Category E</div>
<svg style="left:1690px;top:710px" width="30" height="40" viewBox="0 0 30 40">
<path d="M9.6 22 L9.6 12 Q9.6 10 11.1 10 Q12.6 10 12.6 12 L12.6 17.5 L12.6 16.8 Q12.6 15.2 14.1 15.2 Q15.6 15.2 15.6 16.8 L15.6 18 L15.6 17.3 Q15.6 15.8 17.1 15.8 Q18.6 15.8 18.6 17.3 L18.6 18.5 Q18.6 17 20.1 17 Q21.6 17 21.6 18.5 L21.6 26 Q21.6 31 19.5 32.6 Q17.5 33.6 14.5 33.6 Q11.5 33.6 10 31.8 L4.8 25.6 Q4 24.5 5.2 23.6 Q6.4 22.8 7.6 24 Z"
 fill="#ffffff" stroke="#111111" stroke-width="1" stroke-linejoin="round"/>
<path d="M12.6 17.5 L12.6 21 M15.6 18 L15.6 21 M18.6 18.5 L18.6 21" stroke="#111" stroke-width="0.9"/>
</svg>
<div class="r" style="left:57px;top:1059px;width:1204px;height:72px;background:#2e3343;"></div>
<div class="r" style="left:57px;top:1131px;width:1204px;height:176px;background:#262b38;"></div>
<div class="t" style="left:80.00px;top:1084.77px;font-size:20px;color:#ffffff;font-weight:bold;letter-spacing:-0.140px;">Operations by Specialty and Category</div>
<svg style="left:1201.5px;top:1075.0px" width="40" height="40" viewBox="0 0 40 40"><circle cx="20.0" cy="20.0" r="12.3" fill="none" stroke="#c762f6" stroke-width="5.9" stroke-dasharray="4.40 8.48" stroke-linecap="round" transform="rotate(-86.2 20.0 20.0)"/></svg>
<svg style="left:57px;top:1131px" width="1204" height="176" viewBox="0 0 1204 176">
<line x1="86.80000000000001" y1="26.5" x2="1172" y2="26.5" stroke="#8a7f93" stroke-width="1" stroke-dasharray="6 6"/>
<line x1="86.80000000000001" y1="125.5" x2="1172" y2="125.5" stroke="#8a7f93" stroke-width="1" stroke-dasharray="6 6"/>
<rect x="96.9" y="117.6" width="19.5" height="16.6" fill="#3fa0f5"/>
<rect x="96.9" y="134.2" width="19.5" height="21.2" fill="#69cf8a"/>
<rect x="96.9" y="155.4" width="19.5" height="23.6" fill="#b9d05e"/>
<rect x="134.0" y="132.7" width="19.5" height="1.3" fill="#3a9bb8"/>
<rect x="134.0" y="134.0" width="19.5" height="1.3" fill="#b9d05e"/>
<rect x="134.0" y="135.3" width="19.5" height="43.7" fill="#f2ee3a"/>
<rect x="171.8" y="138.5" width="19.5" height="1.8" fill="#b9d05e"/>
<rect x="171.8" y="140.3" width="19.5" height="38.7" fill="#f2ee3a"/>
</svg>
<div class="t" style="top:1148.6px;font-size:17px;color:#e8e9ec;font-weight:normal;left:61.0px;width:60px;text-align:right;">1500</div>
<div class="t" style="top:1247.6px;font-size:17px;color:#e8e9ec;font-weight:normal;left:61.0px;width:60px;text-align:right;">1000</div>
<div class="t" style="top:1221.9px;font-size:19px;color:#ffffff;font-weight:normal;left:144.8px;width:60px;text-align:center;">1 040</div>
<div class="t" style="top:1242.9px;font-size:19px;color:#ffffff;font-weight:normal;left:208.7px;width:60px;text-align:center;">933</div>
<div class="t" style="top:1297.4px;font-size:19px;color:#ffffff;font-weight:normal;left:246.2px;width:60px;text-align:center;">650</div>
<div class="r" style="left:339.5px;top:1305px;width:2px;height:2px;background:#8d8f96;"></div>
<div class="r" style="left:358px;top:1305px;width:2px;height:2px;background:#8d8f96;"></div>
<div class="r" style="left:1285px;top:1059px;width:1204px;height:72px;background:#2e3343;"></div>
<div class="r" style="left:1285px;top:1131px;width:1204px;height:176px;background:#262b38;"></div>
<div class="t" style="left:1308.20px;top:1084.77px;font-size:20px;color:#ffffff;font-weight:bold;letter-spacing:-0.136px;">Operations by Specialty and Category and Week</div>
<svg style="left:2430.0px;top:1075.0px" width="40" height="40" viewBox="0 0 40 40"><circle cx="20.0" cy="20.0" r="12.3" fill="none" stroke="#c762f6" stroke-width="5.9" stroke-dasharray="4.40 8.48" stroke-linecap="round" transform="rotate(-86.2 20.0 20.0)"/></svg>
<svg style="left:1285px;top:1131px" width="1204" height="176" viewBox="0 0 1204 176">
<line x1="76" y1="26.09999999999991" x2="1175" y2="26.09999999999991" stroke="#8a7f93" stroke-width="1" stroke-dasharray="6 6"/>
<line x1="76" y1="108.59999999999991" x2="1175" y2="108.59999999999991" stroke="#8a7f93" stroke-width="1" stroke-dasharray="6 6"/>
<polygon points="86.7,404.8 158.6,413.4 230.5,391.8 302.4,405.8 374.3,394.4 446.2,403.3 518.1,388.3 590.0,383.7 661.9,419.3 733.8,388.0 805.7,383.0 877.6,391.8 949.5,401.9 1021.4,401.9 1093.3,422.9 1165.2,500.6 1165.2,521.1 1093.3,521.1 1021.4,521.1 949.5,521.1 877.6,521.1 805.7,521.1 733.8,521.1 661.9,521.1 590.0,521.1 518.1,521.1 446.2,521.1 374.3,521.1 302.4,521.1 230.5,521.1 158.6,521.1 86.7,521.1" fill="#f33a41" fill-opacity="0.75"/>
<polygon points="86.7,293.8 158.6,269.5 230.5,258.3 302.4,277.3 374.3,293.8 446.2,271.1 518.1,258.3 590.0,252.0 661.9,318.0 733.8,278.5 805.7,253.2 877.6,280.4 949.5,281.8 1021.4,278.5 1093.3,310.2 1165.2,483.1 1165.2,500.6 1093.3,422.9 1021.4,401.9 949.5,401.9 877.6,391.8 805.7,383.0 733.8,388.0 661.9,419.3 590.0,383.7 518.1,388.3 446.2,403.3 374.3,394.4 302.4,405.8 230.5,391.8 158.6,413.4 86.7,404.8" fill="#f2833f" fill-opacity="0.75"/>
<polygon points="86.7,224.1 158.6,209.2 230.5,192.8 302.4,215.3 374.3,229.1 446.2,221.6 518.1,192.8 590.0,194.4 661.9,270.8 733.8,231.6 805.7,198.1 877.6,226.6 949.5,212.1 1021.4,229.9 1093.3,269.0 1165.2,473.4 1165.2,483.1 1093.3,310.2 1021.4,278.5 949.5,281.8 877.6,280.4 805.7,253.2 733.8,278.5 661.9,318.0 590.0,252.0 518.1,258.3 446.2,271.1 374.3,293.8 302.4,277.3 230.5,258.3 158.6,269.5 86.7,293.8" fill="#f5f041" fill-opacity="0.75"/>
<polygon points="86.7,173.8 158.6,162.2 230.5,138.3 302.4,160.7 374.3,170.9 446.2,178.7 518.1,155.8 590.0,158.3 661.9,228.8 733.8,182.3 805.7,148.8 877.6,177.2 949.5,155.1 1021.4,169.6 1093.3,236.1 1165.2,457.6 1165.2,473.4 1093.3,269.0 1021.4,229.9 949.5,212.1 877.6,226.6 805.7,198.1 733.8,231.6 661.9,270.8 590.0,194.4 518.1,192.8 446.2,221.6 374.3,229.1 302.4,215.3 230.5,192.8 158.6,209.2 86.7,224.1" fill="#bbd060" fill-opacity="0.75"/>
<polygon points="86.7,152.3 158.6,139.9 230.5,112.7 302.4,138.0 374.3,143.2 446.2,145.7 518.1,122.9 590.0,130.5 661.9,205.9 733.8,148.8 805.7,121.0 877.6,150.7 949.5,133.5 1021.4,146.3 1093.3,220.3 1165.2,445.2 1165.2,457.6 1093.3,236.1 1021.4,169.6 949.5,155.1 877.6,177.2 805.7,148.8 733.8,182.3 661.9,228.8 590.0,158.3 518.1,155.8 446.2,178.7 374.3,170.9 302.4,160.7 230.5,138.3 158.6,162.2 86.7,173.8" fill="#73cf8c" fill-opacity="0.75"/>
<polygon points="86.7,144.9 158.6,130.9 230.5,99.5 302.4,132.5 374.3,130.9 446.2,140.8 518.1,111.9 590.0,127.6 661.9,190.3 733.8,143.2 805.7,106.9 877.6,141.6 949.5,128.4 1021.4,139.1 1093.3,218.3 1165.2,440.2 1165.2,445.2 1093.3,220.3 1021.4,146.3 949.5,133.5 877.6,150.7 805.7,121.0 733.8,148.8 661.9,205.9 590.0,130.5 518.1,122.9 446.2,145.7 374.3,143.2 302.4,138.0 230.5,112.7 158.6,139.9 86.7,152.3" fill="#41a4ff" fill-opacity="0.75"/>
<polyline points="86.7,404.8 158.6,413.4 230.5,391.8 302.4,405.8 374.3,394.4 446.2,403.3 518.1,388.3 590.0,383.7 661.9,419.3 733.8,388.0 805.7,383.0 877.6,391.8 949.5,401.9 1021.4,401.9 1093.3,422.9 1165.2,500.6" fill="none" stroke="#f23b42" stroke-width="2.8" stroke-linejoin="round" stroke-linecap="round"/>
<polyline points="86.7,293.8 158.6,269.5 230.5,258.3 302.4,277.3 374.3,293.8 446.2,271.1 518.1,258.3 590.0,252.0 661.9,318.0 733.8,278.5 805.7,253.2 877.6,280.4 949.5,281.8 1021.4,278.5 1093.3,310.2 1165.2,483.1" fill="none" stroke="#f28838" stroke-width="2.8" stroke-linejoin="round" stroke-linecap="round"/>
<polyline points="86.7,224.1 158.6,209.2 230.5,192.8 302.4,215.3 374.3,229.1 446.2,221.6 518.1,192.8 590.0,194.4 661.9,270.8 733.8,231.6 805.7,198.1 877.6,226.6 949.5,212.1 1021.4,229.9 1093.3,269.0 1165.2,473.4" fill="none" stroke="#f4ee36" stroke-width="2.8" stroke-linejoin="round" stroke-linecap="round"/>
<polyline points="86.7,173.8 158.6,162.2 230.5,138.3 302.4,160.7 374.3,170.9 446.2,178.7 518.1,155.8 590.0,158.3 661.9,228.8 733.8,182.3 805.7,148.8 877.6,177.2 949.5,155.1 1021.4,169.6 1093.3,236.1 1165.2,457.6" fill="none" stroke="#bcd15d" stroke-width="2.8" stroke-linejoin="round" stroke-linecap="round"/>
<polyline points="86.7,152.3 158.6,139.9 230.5,112.7 302.4,138.0 374.3,143.2 446.2,145.7 518.1,122.9 590.0,130.5 661.9,205.9 733.8,148.8 805.7,121.0 877.6,150.7 949.5,133.5 1021.4,146.3 1093.3,220.3 1165.2,445.2" fill="none" stroke="#69cf8a" stroke-width="2.8" stroke-linejoin="round" stroke-linecap="round"/>
<polyline points="86.7,144.9 158.6,130.9 230.5,99.5 302.4,132.5 374.3,130.9 446.2,140.8 518.1,111.9 590.0,127.6 661.9,190.3 733.8,143.2 805.7,106.9 877.6,141.6 949.5,128.4 1021.4,139.1 1093.3,218.3 1165.2,440.2" fill="none" stroke="#3fa1f4" stroke-width="2.8" stroke-linejoin="round" stroke-linecap="round"/>
</svg>
<div class="t" style="top:1149.1px;font-size:17px;color:#e8e9ec;font-weight:normal;left:1278.5px;width:60px;text-align:right;">600</div>
<div class="t" style="top:1229.6px;font-size:17px;color:#e8e9ec;font-weight:normal;left:1278.5px;width:60px;text-align:right;">500</div>
<div class="t" style="top:1248.6px;font-size:19px;color:#ffffff;font-weight:normal;left:1355.8px;width:60px;text-align:center;">456</div>
<div class="t" style="top:1234.6px;font-size:19px;color:#ffffff;font-weight:normal;left:1413.6px;width:60px;text-align:center;">473</div>
<div class="t" style="top:1203.2px;font-size:19px;color:#ffffff;font-weight:normal;left:1485.5px;width:60px;text-align:center;">511</div>
<div class="t" style="top:1236.2px;font-size:19px;color:#ffffff;font-weight:normal;left:1557.4px;width:60px;text-align:center;">471</div>
<div class="t" style="top:1234.6px;font-size:19px;color:#ffffff;font-weight:normal;left:1629.3px;width:60px;text-align:center;">473</div>
<div class="t" style="top:1244.5px;font-size:19px;color:#ffffff;font-weight:normal;left:1701.2px;width:60px;text-align:center;">461</div>
<div class="t" style="top:1215.6px;font-size:19px;color:#ffffff;font-weight:normal;left:1773.1px;width:60px;text-align:center;">496</div>
<div class="t" style="top:1231.3px;font-size:19px;color:#ffffff;font-weight:normal;left:1845.0px;width:60px;text-align:center;">477</div>
<div class="t" style="top:1294.0px;font-size:19px;color:#ffffff;font-weight:normal;left:1916.9px;width:60px;text-align:center;">401</div>
<div class="t" style="top:1247.0px;font-size:19px;color:#ffffff;font-weight:normal;left:1988.8px;width:60px;text-align:center;">458</div>
<div class="t" style="top:1210.7px;font-size:19px;color:#ffffff;font-weight:normal;left:2060.7px;width:60px;text-align:center;">502</div>
<div class="t" style="top:1245.3px;font-size:19px;color:#ffffff;font-weight:normal;left:2132.6px;width:60px;text-align:center;">460</div>
<div class="t" style="top:1232.1px;font-size:19px;color:#ffffff;font-weight:normal;left:2204.5px;width:60px;text-align:center;">476</div>
<div class="t" style="top:1242.8px;font-size:19px;color:#ffffff;font-weight:normal;left:2276.4px;width:60px;text-align:center;">463</div>
<div class="t" style="top:1322.0px;font-size:19px;color:#ffffff;font-weight:normal;left:2348.3px;width:60px;text-align:center;">367</div>
<div class="t" style="top:1544.0px;font-size:19px;color:#ffffff;font-weight:normal;left:2420.2px;width:60px;text-align:center;">98</div>
<svg style="left:2465px;top:1227px" width="53.8" height="53.8" viewBox="0 0 24 24"><path fill="#1a55b5" d="M12 2C6.48 2 2 6.48 2 12s4.48 10 10 10 10-4.48 10-10S17.52 2 12 2zm1 17h-2v-2h2v2zm2.07-7.750l-.9.92C13.45 12.9 13 13.5 13 15h-2v-.5c0-1.1.45-2.1 1.17-2.83l1.24-1.26c.37-.36.59-.86.59-1.41 0-1.1-.9-2-2-2s-2 .9-2 2H8c0-2.21 1.79-4 4-4s4 1.790 4 4c0 .88-.36 1.68-.93 2.25z"/></svg>
<div class="t" style="left:2453.88px;top:1281.80px;font-size:15px;color:#a9abb0;font-weight:normal;letter-spacing:0.164px;">1.2509.1</div>
</body></html>
